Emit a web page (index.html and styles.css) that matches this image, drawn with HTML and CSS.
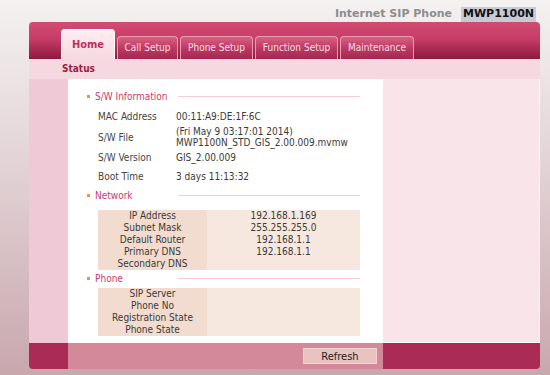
FILE: index.html
```html
<!DOCTYPE html>
<html lang="en">

<head>
    <meta charset="UTF-8">
    <title>Internet SIP Phone MWP1100N</title>
    <link rel="stylesheet" href="styles.css">
</head>

<body>
    <div class="top">
        <span class="product">Internet SIP Phone</span>
        <span class="model">MWP1100N</span>
    </div>
    <div class="frame">
        <div class="tabbar">
            <div class="tab active t-home">Home</div>
            <div class="tab t-call">Call Setup</div>
            <div class="tab t-phone">Phone Setup</div>
            <div class="tab t-func">Function Setup</div>
            <div class="tab t-maint">Maintenance</div>
        </div>
        <div class="subbar">Status</div>
        <div class="content">
            <div class="side-l"></div>
            <div class="main">
                <div class="sec">
                    <div class="sec-title"><span class="bullet"></span>S/W Information</div>
                    <div class="sec-line"></div>
                </div>
                <table class="info">
                    <tr><td class="lbl">MAC Address</td><td>00:11:A9:DE:1F:6C</td></tr>
                    <tr class="tall"><td class="lbl">S/W File</td><td>(Fri May 9 03:17:01 2014)<br>MWP1100N_STD_GIS_2.00.009.mvmw</td></tr>
                    <tr><td class="lbl">S/W Version</td><td>GIS_2.00.009</td></tr>
                    <tr><td class="lbl">Boot Time</td><td>3 days 11:13:32</td></tr>
                </table>

                <div class="sec sec-net">
                    <div class="sec-title"><span class="bullet"></span>Network</div>
                    <div class="sec-line"></div>
                </div>
                <table class="grid net">
                    <tr><td class="k">IP Address</td><td class="v">192.168.1.169</td></tr>
                    <tr><td class="k">Subnet Mask</td><td class="v">255.255.255.0</td></tr>
                    <tr><td class="k">Default Router</td><td class="v">192.168.1.1</td></tr>
                    <tr><td class="k">Primary DNS</td><td class="v">192.168.1.1</td></tr>
                    <tr><td class="k">Secondary DNS</td><td class="v"></td></tr>
                </table>

                <div class="sec sec-phone">
                    <div class="sec-title"><span class="bullet"></span>Phone</div>
                    <div class="sec-line"></div>
                </div>
                <table class="grid phone">
                    <tr><td class="k">SIP Server</td><td class="v"></td></tr>
                    <tr><td class="k">Phone No</td><td class="v"></td></tr>
                    <tr><td class="k">Registration State</td><td class="v"></td></tr>
                    <tr><td class="k">Phone State</td><td class="v"></td></tr>
                </table>
            </div>
            <div class="side-r"></div>
        </div>
        <div class="foot">
            <div class="foot-l"></div>
            <div class="foot-m"><button class="refresh">Refresh</button></div>
            <div class="foot-r"></div>
        </div>
    </div>
</body>

</html>
```

FILE: styles.css
```css
body {
    margin: 0;
    height: 375px;
    overflow: hidden;
    font-family: "DejaVu Sans Condensed", "DejaVu Sans", sans-serif;
    font-stretch: condensed;
    font-size: 10px;
    color: #3a3a3a;
    background: linear-gradient(#f4f1f1, #e4d6d8 40%, #c8a7ad);
}

/* product title */
.top { height: 22px; box-sizing: border-box; padding: 7px 14px 0 0; display: flex; justify-content: flex-end; gap: 9px; font-family: "DejaVu Sans", sans-serif; font-stretch: normal; font-weight: bold; font-size: 11px; line-height: 13px; }
.product { color: #8d8d8d; }
.model { color: #111; background-color: #c6cad2; padding: 0 2px; }

.frame { margin-left: 29px; width: 511px; border-radius: 4px; overflow: hidden; }

/* tabs */
.tabbar { height: 37px; box-sizing: border-box; padding-left: 32px; display: flex; align-items: flex-end; gap: 2px; background: linear-gradient(#d24b73, #c63e67 45%, #8d1a3f); }
.tab { height: 23px; box-sizing: border-box; text-align: center; line-height: 22px; color: #f7dfe7; background: linear-gradient(#d8607f, #ba3861 55%, #a32851); border: 1px solid #ec9db6; border-bottom: none; border-radius: 4px 4px 0 0; }
.tab.active { height: 30px; line-height: 29px; font-weight: bold; font-size: 11px; color: #c22f5a; background: linear-gradient(#fdeef3, #f6d8e0); border-color: #fff; }
.t-home { width: 54px; }
.t-call { width: 61px; }
.t-phone { width: 73px; }
.t-func { width: 83px; }
.t-maint { width: 74px; }

.subbar { height: 20px; padding-left: 33px; line-height: 20px; font-weight: bold; color: #9c1e40; background-color: #f6d8e0; }

/* body columns */
.content, .foot { display: grid; grid-template-columns: 39px 315px 1fr; }
.side-l { background-color: #efc9d5; }
.side-r { background-color: #f8e4e9; box-shadow: inset 0 -1px #fff, inset -1px 0 #fdf2f5; }
.main { background-color: #fff; padding: 11px 23px 7px 19px; }

.sec { display: grid; grid-template-columns: 91px 1fr; align-items: center; height: 13px; }
.sec-title { display: flex; align-items: center; color: #cb3b6b; }
.bullet { width: 3px; height: 3px; background-color: #f39236; margin-right: 5px; }
.sec-line { border-top: 1px solid #f6cccc; }
.sec-net { margin-top: 3px; }
.sec-phone { margin-top: 2px; }

table { border-collapse: collapse; }
td { padding: 0; }
.info { margin: 4px 0 0 11px; }
.info tr { height: 19px; }
.info tr.tall { height: 21px; line-height: 11px; }
.info .lbl { width: 78px; color: #444; }

.grid { margin-left: 11px; width: 262px; text-align: center; line-height: 12px; }
.grid .k { width: 109px; background-color: #f2dcd0; }
.grid .v { background-color: #f7e8df; }
.net { margin-top: 8px; }
.phone { margin-top: 3px; }

/* footer */
.foot { height: 26px; }
.foot-l, .foot-r { background-color: #a92b56; }
.foot-m { background-color: #d4899a; display: flex; justify-content: flex-end; align-items: center; padding-right: 6px; }
.refresh { width: 74px; height: 16px; padding: 0; font-family: inherit; font-stretch: condensed; font-size: 11px; color: #222; background-color: #e8c3bf; border: 1px solid #f0d4d0; }
```
